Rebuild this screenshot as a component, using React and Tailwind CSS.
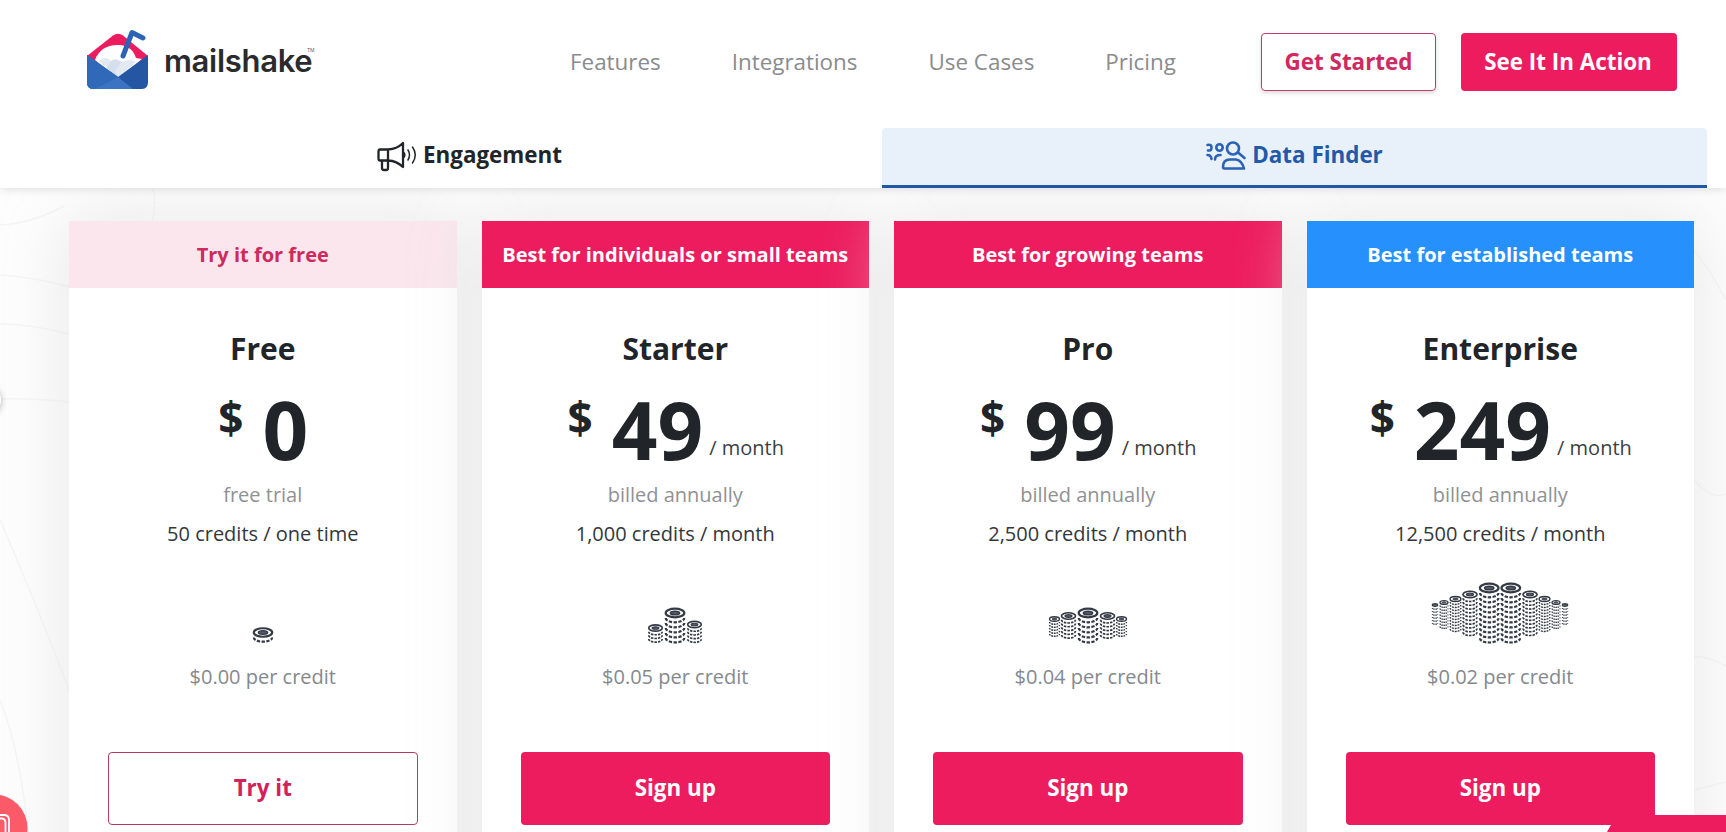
const plans = [
  {
    name: "Free",
    tagline: "Try it for free",
    banner: "bg-[#fbe6ed] text-[#cd2a5e]",
    price: "0",
    billing: "free trial",
    credits: "50 credits / one time",
    perCredit: "$0.00 per credit",
    cta: "Try it",
    // x offset from center, top y, radius, bottom y
    coins: [[0, 62.5, 9.2, 71]],
  },
  {
    name: "Starter",
    tagline: "Best for individuals or small teams",
    banner: "bg-[#ed1c5e] text-white",
    price: "49",
    period: "/ month",
    billing: "billed annually",
    credits: "1,000 credits / month",
    perCredit: "$0.05 per credit",
    cta: "Sign up",
    coins: [
      [-19.5, 58, 6.8, 71],
      [19.5, 54.5, 6.8, 71],
      [0, 43, 9.3, 73],
    ],
  },
  {
    name: "Pro",
    tagline: "Best for growing teams",
    banner: "bg-[#ed1c5e] text-white",
    price: "99",
    period: "/ month",
    billing: "billed annually",
    credits: "2,500 credits / month",
    perCredit: "$0.04 per credit",
    cta: "Sign up",
    coins: [
      [-33.5, 49, 5, 66],
      [33.5, 49, 5, 66],
      [-19.5, 46, 7, 70],
      [19.5, 46, 7, 70],
      [0, 43, 9.3, 73],
    ],
  },
  {
    name: "Enterprise",
    tagline: "Best for established teams",
    banner: "bg-[#2690fc] text-white",
    price: "249",
    period: "/ month",
    billing: "billed annually",
    credits: "12,500 credits / month",
    perCredit: "$0.02 per credit",
    cta: "Sign up",
    coins: [
      [-65, 35, 2.6, 53],
      [65, 35, 2.6, 53],
      [-56, 32.5, 4, 57],
      [56, 32.5, 4, 57],
      [-44.5, 29, 5.4, 61],
      [44.5, 29, 5.4, 61],
      [-30, 24.5, 7, 66],
      [30, 24.5, 7, 66],
      [-10.8, 18, 9.3, 72],
      [10.8, 18, 9.3, 72],
    ],
  },
];

const navLinks = ["Features", "Integrations", "Use Cases", "Pricing"];

const CoinStack = ({ x, top, r, bottom }) => {
  const ry = r * 0.46;
  const step = Math.max(3, r * 0.54);
  const line = Math.max(1.4, r * 0.24);
  const rows = [];
  for (let y = top + step; y + ry <= bottom + 1.5; y += step) {
    rows.push(y);
  }

  return (
    <g fill="none" stroke="#343a45">
      {rows.map((y) => (
        <path
          key={y}
          d={`M${x - r} ${y}A${r} ${ry} 0 0 0 ${x + r} ${y}`}
          strokeWidth={line}
          strokeDasharray={`${r * 0.36} ${r * 0.15}`}
        />
      ))}
      <ellipse cx={x} cy={top} rx={r} ry={ry} fill="#fff" strokeWidth={line} />
      <ellipse cx={x} cy={top} rx={r * 0.5} ry={ry * 0.42} fill="#555c66" strokeWidth={r * 0.16} />
    </g>
  );
};

const Coins = ({ stacks }) => (
  <svg className="mx-auto block h-20 w-40" viewBox="-80 0 160 80">
    {stacks.map(([x, top, r, bottom]) => (
      <CoinStack key={x} x={x} top={top} r={r} bottom={bottom} />
    ))}
  </svg>
);

const Logo = () => (
  <a href="#" className="flex items-center">
    <svg className="h-[62px] w-[64px]" viewBox="0 0 64 62">
      <path d="M1 27L27 6.500Q32 3 37 6.500L62 27L50 36H14Z" fill="#ed1c5e" />
      <path d="M9 31C13 20 22 15 34 16C43 17 48 22 50 29L56 30L32 51Z" fill="#fff" />
      <path d="M13 32Q20 26 25 32Q31 28 36 33Q42 29 50 33L32 49Z" fill="#e3e9f3" />
      <path d="M25 32Q30 28 35 34L29 42L32 49L21 39Z" fill="#cfd8e8" opacity="0.7" />
      <path d="M1 26L32 48L62 26V53Q62 60 56 60H7Q1 60 1 53Z" fill="#2456a4" />
      <path d="M1 26L32 48L47 60H7Q1 60 1 53Z" fill="#3a74c2" />
      <path d="M1 26L32 48L9 60H7Q1 60 1 53Z" fill="#3069b8" />
      <path d="M37 27L46 3.500L57 9" fill="none" stroke="#2c63b4" strokeWidth="5" strokeLinejoin="round" strokeLinecap="round" />
    </svg>
    <span className="ml-3.5 font-[Inter] text-[31px] leading-none font-semibold tracking-[-0.3px] text-[#2b2b2d]">
      mailshake
    </span>
    <span className="-mt-5 -ml-[5px] text-[5px] leading-none text-gray-600">TM</span>
  </a>
);

const MegaphoneIcon = () => (
  <svg className="mt-0.5 h-8 w-10" viewBox="0 0 40 32" fill="none" stroke="#212529" strokeWidth="2.300" strokeLinejoin="round" strokeLinecap="round">
    <path d="M3 9.500Q1.500 9.500 1.500 11.500V18.500Q1.500 20.500 3 20.500H11Q20 21 26 27V3Q20 9 11 9.500ZM11 9.500V20.500M5 20.500V28Q5 30 7 30H9Q11 30 11 28V20.500M26 12Q29 15 26 18" />
    <path d="M31 10Q34 15 31 20M35.500 7Q41 15 35.500 23" strokeWidth="1.500" />
  </svg>
);

const PeopleIcon = () => (
  <svg className="mt-0.5 h-8 w-10" viewBox="1 0 40 32" fill="none" stroke="#2b62b3" strokeWidth="2.600" strokeLinecap="round" strokeLinejoin="round">
    <circle cx="28" cy="8.500" r="6" />
    <path d="M33 12.500L39.500 18M18 27Q18 19.500 25 19.500H31Q37 20.500 39 28.500H19.500Q18 28.500 18 27Z" />
    <circle cx="14.500" cy="7.500" r="3.200" />
    <path d="M10 19.500Q10 15 15.500 15M2.500 5Q6.500 4 6.500 7.500Q6.500 11 3 10.500M2.500 15Q6 15 6.500 19" />
  </svg>
);

const Header = () => (
  <header className="relative z-20 h-[188px] bg-white shadow-[0_2px_8px_rgba(0,0,0,0.11)]">
    <div className="flex h-32 items-start pl-[86px]">
      <div className="w-[484px] pt-[29px]">
        <Logo />
      </div>
      <nav className="mt-[32px] flex h-[60px] w-[691px] items-center gap-[71px] text-[22.4px] text-[#8a8b8d]">
        {navLinks.map((link) => (
          <a key={link} href="#" className="whitespace-nowrap">
            {link}
          </a>
        ))}
      </nav>
      <div className="mt-[33px] flex gap-[25px] text-[22.4px] font-bold">
        <button className="h-[58px] w-[175px] rounded-[4px] border border-[#c43a66] text-[#d02860] shadow-[0_2px_4px_rgba(0,0,0,0.15)]">
          Get Started
        </button>
        <button className="h-[58px] w-[216px] rounded-[4px] bg-[#ed1c5e] pr-0.5 text-white">
          See It In Action
        </button>
      </div>
    </div>
    <div className="flex pr-[19px] pl-[57px] text-[22.4px] font-bold">
      <button className="flex h-[60px] flex-1 items-center justify-center gap-1.5 pb-[6px] text-[#212529]">
        <MegaphoneIcon />
        Engagement
      </button>
      <button className="flex h-[60px] flex-1 items-center justify-center gap-1.5 rounded-t-[4px] border-b-[3px] border-[#1f58a5] bg-[#e8f1fa] pb-[3px] text-[#2259a9]">
        <PeopleIcon />
        Data Finder
      </button>
    </div>
  </header>
);

const PlanCard = ({ plan }) => (
  <div className="relative flex h-[700px] flex-1 flex-col bg-white text-center shadow-[0_0_64px_rgba(224,224,224,0.75)]">
    <div className={`h-[67px] text-[20px] leading-[67px] font-bold whitespace-nowrap ${plan.banner}`}>
      {plan.tagline}
    </div>
    <h2 className="mt-[41px] text-[30px] leading-10 font-bold text-[#212529]">{plan.name}</h2>
    <div className="mt-[11px] flex h-[89px] justify-center pl-px text-[#212529]">
      <span className="mr-[19px] text-[44px] leading-[75px] font-bold">$</span>
      <span className="text-[80px] leading-[98px] font-bold">{plan.price}</span>
      {plan.period && (
        <span className="ml-[6px] text-[20px] leading-[136px] text-[#3c3f43]">{plan.period}</span>
      )}
    </div>
    <p className="mt-[7px] text-[20px] leading-[38px] text-[#909193]">{plan.billing}</p>
    <p className="text-[20px] leading-[40px] text-[#33373b]">{plan.credits}</p>
    <div className="mt-[16px]">
      <Coins stacks={plan.coins} />
    </div>
    <p className="mt-[7px] text-[20px] leading-10 text-[#85898d]">{plan.perCredit}</p>
    <div className="mt-[55px] px-[39px]">
      {plan.price === "0" ? (
        <button className="h-[73px] w-full rounded-[4px] border border-[#b53a62] pb-0.5 text-[22.4px] font-bold text-[#d0225d]">
          {plan.cta}
        </button>
      ) : (
        <button className="h-[73px] w-full rounded-[4px] bg-[#ed1c5e] pb-0.5 text-[22.4px] font-bold text-white">
          {plan.cta}
        </button>
      )}
    </div>
  </div>
);

const BackgroundLines = () => (
  <svg className="absolute inset-0 h-full w-full" viewBox="0 0 1726 832" fill="none" stroke="#f5f5f5" strokeWidth="1.500">
    <path d="M0 225Q30 224 64 206M0 275Q40 278 69 287M0 324Q30 324 69 334M0 399Q30 398 69 402" />
    <path d="M153 188Q157 205 152 221M0 520Q35 600 69 690M0 700Q20 750 28 832" />
    <path d="M1694 250Q1710 270 1726 300M1694 480Q1710 500 1726 494M1694 657Q1705 655 1726 666M1694 790L1726 782" />
  </svg>
);

const App = () => {
  return (
    <div className="relative h-screen overflow-hidden bg-[#fdfdfd] font-['Open_Sans',sans-serif]">
      <BackgroundLines />
      <Header />
      <main className="relative flex gap-[25px] pt-[33px] pr-[32px] pl-[69px]">
        {plans.map((plan) => (
          <PlanCard key={plan.name} plan={plan} />
        ))}
      </main>

      {/* Widgets on the edges of the window */}
      <div className="absolute top-[384px] -left-[31px] z-30 h-8 w-8 rounded-full bg-white shadow-[0_1px_6px_rgba(0,0,0,0.3)]" />
      <svg className="absolute bottom-0 left-0 z-30 h-10 w-8" viewBox="0 0 32 40">
        <circle cx="-6" cy="36" r="33.500" fill="#fb5b68" />
        <path d="M0 23H4Q9 23 9 28V40M0 26.500H2Q5.500 27 5.500 31V40" fill="none" stroke="#fff" strokeWidth="1.800" />
      </svg>
      <svg className="absolute right-0 bottom-0 z-30 h-[17px] w-[120px]" viewBox="0 0 120 17">
        <path d="M1 17Q5 10 8 4L18 0H120V17Z" fill="#ed1c5e" />
        <path d="M-2 17Q3 11 5.500 10H-8V17Z" fill="#fff" />
      </svg>
    </div>
  );
};

export default App;
